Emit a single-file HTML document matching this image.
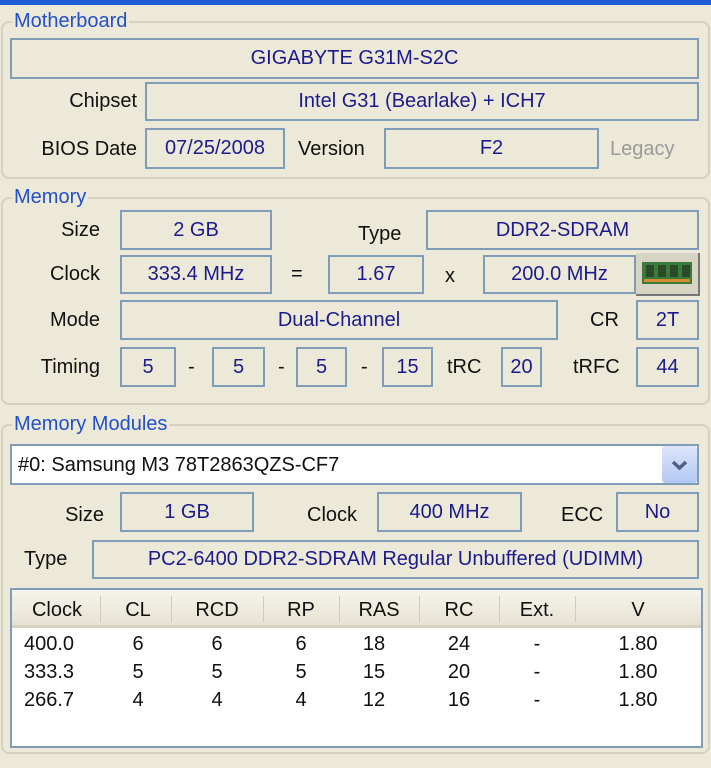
<!DOCTYPE html><html><head><style>
body{margin:0;width:711px;height:768px;background:#ECE9D8;position:relative;overflow:hidden;font-family:"Liberation Sans",sans-serif;font-size:20px}
.a{position:absolute}
.f{position:absolute;border:2px solid #7F9DB9;box-sizing:border-box;color:#1c1a8c;text-align:center;display:flex;align-items:center;justify-content:center;background:#ECE9D8}
.l{position:absolute;color:#111;line-height:24px;white-space:nowrap}
.r{text-align:right}
.g{position:absolute;border:2px solid #d4d0c2;border-radius:8px;box-sizing:border-box}
.t{position:absolute;color:#2250c8;background:#ECE9D8;padding:0 2px;line-height:24px}
.c{position:absolute;line-height:28px;color:#111;text-align:center}
</style></head><body>
<div class="a" style="left:0;top:0;width:711px;height:5px;background:#1f5ed8"></div>

<div class="g" style="left:1px;top:21px;width:709px;height:158px"></div>
<div class="t" style="left:12px;top:9px">Motherboard</div>
<div class="f" style="left:10px;top:38px;width:689px;height:41px">GIGABYTE G31M-S2C</div>
<div class="l r" style="left:20px;top:89px;width:117px">Chipset</div>
<div class="f" style="left:145px;top:82px;width:554px;height:39px">Intel G31 (Bearlake) + ICH7</div>
<div class="l r" style="left:10px;top:137px;width:127px">BIOS Date</div>
<div class="f" style="left:145px;top:128px;width:140px;height:41px">07/25/2008</div>
<div class="l" style="left:298px;top:137px">Version</div>
<div class="f" style="left:384px;top:128px;width:215px;height:41px">F2</div>
<div class="l" style="left:610px;top:137px;color:#9a9a9a">Legacy</div>

<div class="g" style="left:1px;top:197px;width:709px;height:208px"></div>
<div class="t" style="left:12px;top:185px">Memory</div>
<div class="l r" style="left:20px;top:218px;width:80px">Size</div>
<div class="f" style="left:120px;top:210px;width:152px;height:40px">2 GB</div>
<div class="l" style="left:358px;top:222px">Type</div>
<div class="f" style="left:426px;top:210px;width:273px;height:40px">DDR2-SDRAM</div>
<div class="l r" style="left:20px;top:262px;width:80px">Clock</div>
<div class="f" style="left:120px;top:255px;width:152px;height:39px">333.4 MHz</div>
<div class="l" style="left:291px;top:262px">=</div>
<div class="f" style="left:328px;top:255px;width:96px;height:39px">1.67</div>
<div class="l" style="left:445px;top:264px">x</div>
<div class="f" style="left:483px;top:255px;width:153px;height:39px">200.0 MHz</div>
<div class="a" style="left:636px;top:253px;width:64px;height:43px;background:#d8d4c4;border-right:2px solid #777;border-bottom:2px solid #777;box-sizing:border-box">
<div class="a" style="left:6px;top:9px;width:50px;height:22px;background:#3a7a3a"></div>
<div class="a" style="left:10px;top:12px;width:8px;height:12px;background:#2a4a2a"></div><div class="a" style="left:22px;top:12px;width:8px;height:12px;background:#2a4a2a"></div><div class="a" style="left:34px;top:12px;width:8px;height:12px;background:#2a4a2a"></div><div class="a" style="left:46px;top:12px;width:8px;height:12px;background:#2a4a2a"></div>
<div class="a" style="left:8px;top:26px;width:46px;height:3px;background:#d88a30"></div></div>
<div class="l r" style="left:20px;top:308px;width:80px">Mode</div>
<div class="f" style="left:120px;top:300px;width:438px;height:40px">Dual-Channel</div>
<div class="l" style="left:590px;top:308px">CR</div>
<div class="f" style="left:636px;top:300px;width:63px;height:40px">2T</div>
<div class="l r" style="left:20px;top:355px;width:80px">Timing</div>
<div class="f" style="left:120px;top:347px;width:56px;height:40px">5</div>
<div class="l" style="left:188px;top:355px">-</div>
<div class="f" style="left:212px;top:347px;width:53px;height:40px">5</div>
<div class="l" style="left:278px;top:355px">-</div>
<div class="f" style="left:296px;top:347px;width:51px;height:40px">5</div>
<div class="l" style="left:361px;top:355px">-</div>
<div class="f" style="left:382px;top:347px;width:51px;height:40px">15</div>
<div class="l" style="left:447px;top:355px">tRC</div>
<div class="f" style="left:501px;top:347px;width:41px;height:40px">20</div>
<div class="l" style="left:573px;top:355px">tRFC</div>
<div class="f" style="left:636px;top:347px;width:63px;height:40px">44</div>

<div class="g" style="left:1px;top:424px;width:709px;height:330px"></div>
<div class="t" style="left:12px;top:412px">Memory Modules</div>
<div class="a" style="left:10px;top:444px;width:689px;height:41px;border:2px solid #7F9DB9;box-sizing:border-box;background:#fff"></div>
<div class="l" style="left:18px;top:453px">#0: Samsung M3 78T2863QZS-CF7</div>
<div class="a" style="left:662px;top:446px;width:35px;height:37px;background:linear-gradient(#dce6fb,#b4c8f4);border-radius:3px"><svg width="35" height="37" viewBox="0 0 35 37"><path d="M11 16 L17.5 22 L24 16" fill="none" stroke="#4d6185" stroke-width="3.5"/></svg></div>
<div class="l r" style="left:20px;top:503px;width:84px">Size</div>
<div class="f" style="left:120px;top:492px;width:134px;height:40px">1 GB</div>
<div class="l" style="left:307px;top:503px">Clock</div>
<div class="f" style="left:377px;top:492px;width:145px;height:40px">400 MHz</div>
<div class="l" style="left:561px;top:503px">ECC</div>
<div class="f" style="left:616px;top:492px;width:83px;height:40px">No</div>
<div class="l" style="left:24px;top:547px">Type</div>
<div class="f" style="left:92px;top:540px;width:607px;height:39px">PC2-6400 DDR2-SDRAM Regular Unbuffered (UDIMM)</div>

<div class="a" style="left:10px;top:588px;width:693px;height:160px;border:2px solid #7F9DB9;box-sizing:border-box;background:#fff"></div>
<div class="a" style="left:12px;top:590px;width:689px;height:38px;background:linear-gradient(#f6f4ec,#e6e2d2);border-bottom:3px solid #d6d2c2;box-sizing:border-box"></div>
<div class="c" style="left:14px;top:596px;width:86px">Clock</div>
<div class="c" style="left:105px;top:596px;width:66px">CL</div>
<div class="c" style="left:171px;top:596px;width:92px">RCD</div>
<div class="c" style="left:263px;top:596px;width:76px">RP</div>
<div class="c" style="left:339px;top:596px;width:80px">RAS</div>
<div class="c" style="left:419px;top:596px;width:80px">RC</div>
<div class="c" style="left:499px;top:596px;width:76px">Ext.</div>
<div class="c" style="left:575px;top:596px;width:126px">V</div>
<div class="a" style="left:100px;top:596px;width:1px;height:26px;background:#d0ccbc"></div>
<div class="a" style="left:171px;top:596px;width:1px;height:26px;background:#d0ccbc"></div>
<div class="a" style="left:263px;top:596px;width:1px;height:26px;background:#d0ccbc"></div>
<div class="a" style="left:339px;top:596px;width:1px;height:26px;background:#d0ccbc"></div>
<div class="a" style="left:419px;top:596px;width:1px;height:26px;background:#d0ccbc"></div>
<div class="a" style="left:499px;top:596px;width:1px;height:26px;background:#d0ccbc"></div>
<div class="a" style="left:575px;top:596px;width:1px;height:26px;background:#d0ccbc"></div>
<div class="a" style="left:0;top:630px;width:711px;font-size:20px">
<div class="c" style="left:24px;top:0;text-align:left">400.0</div><div class="c" style="left:105px;width:66px">6</div><div class="c" style="left:171px;width:92px">6</div><div class="c" style="left:263px;width:76px">6</div><div class="c" style="left:339px;width:70px">18</div><div class="c" style="left:419px;width:80px">24</div><div class="c" style="left:499px;width:76px">-</div><div class="c" style="left:575px;width:126px">1.80</div>
<div class="c" style="left:24px;top:28px;text-align:left">333.3</div><div class="c" style="left:105px;top:28px;width:66px">5</div><div class="c" style="left:171px;top:28px;width:92px">5</div><div class="c" style="left:263px;top:28px;width:76px">5</div><div class="c" style="left:339px;top:28px;width:70px">15</div><div class="c" style="left:419px;top:28px;width:80px">20</div><div class="c" style="left:499px;top:28px;width:76px">-</div><div class="c" style="left:575px;top:28px;width:126px">1.80</div>
<div class="c" style="left:24px;top:56px;text-align:left">266.7</div><div class="c" style="left:105px;top:56px;width:66px">4</div><div class="c" style="left:171px;top:56px;width:92px">4</div><div class="c" style="left:263px;top:56px;width:76px">4</div><div class="c" style="left:339px;top:56px;width:70px">12</div><div class="c" style="left:419px;top:56px;width:80px">16</div><div class="c" style="left:499px;top:56px;width:76px">-</div><div class="c" style="left:575px;top:56px;width:126px">1.80</div>
</div>
</body></html>
